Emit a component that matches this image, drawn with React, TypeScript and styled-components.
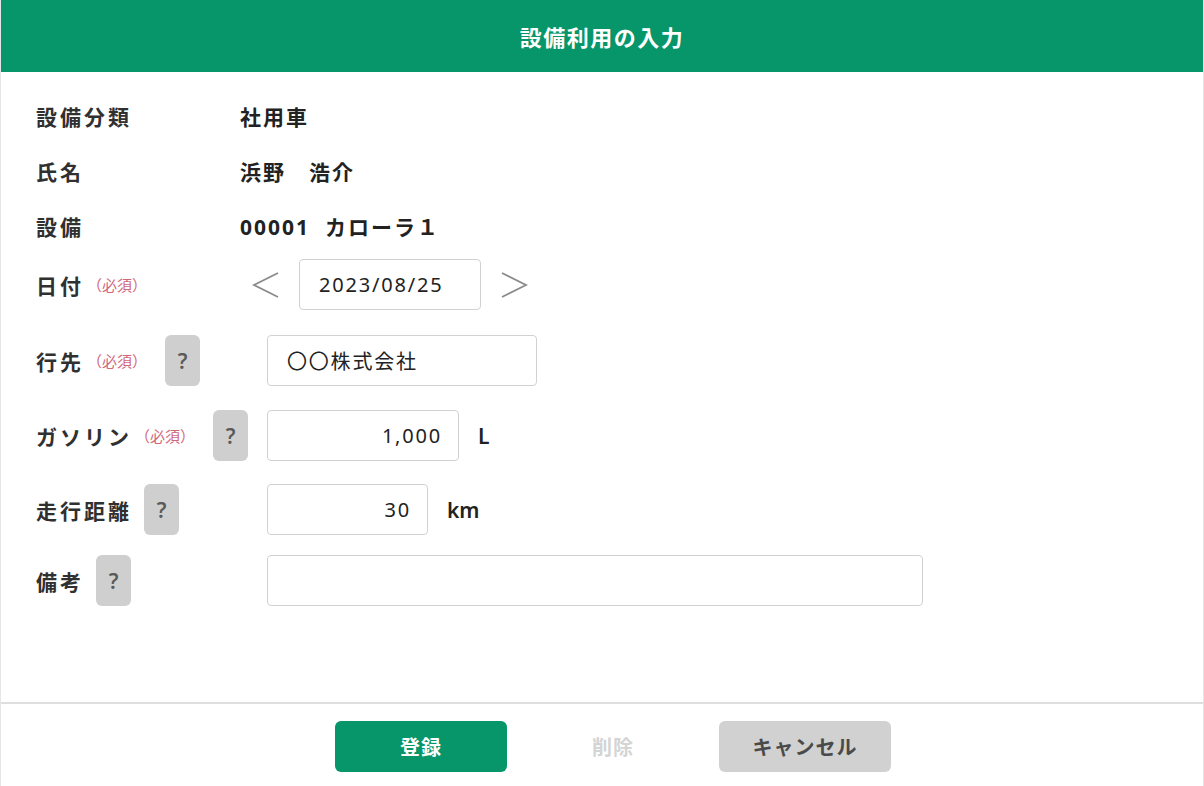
import * as React from 'react';
import styled, { createGlobalStyle } from 'styled-components';

const GlobalStyle = createGlobalStyle`
    html, body {
        margin: 0;
        padding: 0;
        background: #ffffff;
    }
    body {
        font-family: "Noto Sans", "Noto Sans CJK JP", sans-serif;
        color: #2a2a2a;
    }
`;

const Page = styled.div`
    width: 1204px;
    height: 786px;
    display: flex;
    flex-direction: column;
    box-sizing: border-box;
    border-left: 1px solid #e6e6e6;
    border-right: 1px solid #e6e6e6;
`;

const Header = styled.header`
    height: 72px;
    flex-shrink: 0;
    background: #07966a;
    display: flex;
    align-items: center;
    justify-content: center;
    color: #ffffff;
    font-size: 22px;
    font-weight: bold;
    letter-spacing: 1.5px;
`;

const Form = styled.main`
    flex: 1;
    padding: 16px 0 0 35px;
    display: flex;
    flex-direction: column;
`;

const InfoRow = styled.div`
    height: 55px;
    display: flex;
    align-items: center;
`;

const FieldRow = styled.div<{ $top: number }>`
    height: 51px;
    margin-top: ${(p) => p.$top}px;
    display: flex;
    align-items: center;
`;

const LabelArea = styled.div<{ $width: number }>`
    width: ${(p) => p.$width}px;
    height: 100%;
    flex-shrink: 0;
    display: flex;
    align-items: center;
`;

const Label = styled.span`
    font-size: 21px;
    font-weight: bold;
    letter-spacing: 3px;
    color: #303030;
`;

const Required = styled.span`
    font-size: 15px;
    color: #d2677a;
    margin-left: 3px;
    margin-right: 6px;
    letter-spacing: 0;
`;

const HelpButton = styled.button`
    width: 35px;
    height: 51px;
    margin-left: 12px;
    border: none;
    border-radius: 6px;
    background: #cfcfcf;
    color: #5a5a5a;
    font-family: "Noto Sans", sans-serif;
    font-size: 21px;
    font-weight: 600;
    padding: 0;
    cursor: pointer;
`;

const Value = styled.span`
    font-size: 21px;
    font-weight: bold;
    letter-spacing: 2px;
    color: #222222;
    white-space: pre;
`;

const DateNav = styled.div`
    display: flex;
    align-items: center;
    gap: 18px;
`;

const Chevron = styled.button`
    width: 30px;
    height: 34px;
    border: none;
    background: none;
    padding: 0;
    display: flex;
    align-items: center;
    justify-content: center;
    cursor: pointer;
`;

const TextBox = styled.div<{ $width: number; $align?: string }>`
    width: ${(p) => p.$width}px;
    height: 51px;
    box-sizing: border-box;
    border: 1px solid #d2d2d2;
    border-radius: 4px;
    display: flex;
    align-items: center;
    justify-content: ${(p) => (p.$align === 'right' ? 'flex-end' : 'flex-start')};
    padding: 0 16px 0 19px;
    font-size: 20px;
    letter-spacing: 1.8px;
    color: #222222;
    background: #ffffff;
`;

const Unit = styled.span`
    margin-left: 19px;
    font-size: 21px;
    font-weight: 600;
    color: #222222;
`;

const Footer = styled.footer`
    height: 84px;
    flex-shrink: 0;
    border-top: 2px solid #dedede;
    display: flex;
    justify-content: center;
    align-items: flex-start;
    padding: 17px 0 0 22px;
    gap: 20px;
    box-sizing: border-box;
`;

const ActionButton = styled.button<{ $variant: 'primary' | 'disabled' | 'secondary' }>`
    width: 172px;
    height: 51px;
    border: none;
    border-radius: 6px;
    font-family: "Noto Sans", "Noto Sans CJK JP", sans-serif;
    font-size: 20px;
    font-weight: bold;
    letter-spacing: 1px;
    cursor: pointer;
    background: ${(p) => (p.$variant === 'primary' ? '#07966a' : p.$variant === 'secondary' ? '#d1d1d1' : 'transparent')};
    color: ${(p) => (p.$variant === 'primary' ? '#ffffff' : p.$variant === 'secondary' ? '#4a4a4a' : '#d4d4d4')};
`;

const ArrowIcon = ({ dir }: { dir: 'left' | 'right' }) => (
    <svg width="28" height="30" viewBox="0 0 28 30">
        <polyline
            points={dir === 'left' ? '26,3 2,15 26,27' : '2,3 26,15 2,27'}
            fill="none"
            stroke="#8a8a8a"
            strokeWidth="1.8"
        />
    </svg>
);

const info = [
    { label: '設備分類', value: '社用車' },
    { label: '氏名', value: '浜野　浩介' },
    { label: '設備', value: '00001  カローラ１' },
];

const fields = [
    { label: '行先', required: true, top: 25, box: 270, align: 'left', text: '〇〇株式会社', unit: '' },
    { label: 'ガソリン', required: true, top: 24, box: 192, align: 'right', text: '1,000', unit: 'L' },
    { label: '走行距離', required: false, top: 23, box: 161, align: 'right', text: '30', unit: 'km' },
    { label: '備考', required: false, top: 20, box: 656, align: 'left', text: '', unit: '' },
];

const App = () => {
    return (
        <>
            <GlobalStyle />
            <Page>
                <Header>設備利用の入力</Header>
                <Form>
                    {info.map((item) => (
                        <InfoRow key={item.label}>
                            <LabelArea $width={204}>
                                <Label>{item.label}</Label>
                            </LabelArea>
                            <Value>{item.value}</Value>
                        </InfoRow>
                    ))}
                    <FieldRow $top={6}>
                        <LabelArea $width={215}>
                            <Label>日付</Label>
                            <Required>（必須）</Required>
                        </LabelArea>
                        <DateNav>
                            <Chevron aria-label="前日">
                                <ArrowIcon dir="left" />
                            </Chevron>
                            <TextBox $width={182}>2023/08/25</TextBox>
                            <Chevron aria-label="翌日">
                                <ArrowIcon dir="right" />
                            </Chevron>
                        </DateNav>
                    </FieldRow>
                    {fields.map((f) => (
                        <FieldRow key={f.label} $top={f.top}>
                            <LabelArea $width={231}>
                                <Label>{f.label}</Label>
                                {f.required && <Required>（必須）</Required>}
                                <HelpButton>?</HelpButton>
                            </LabelArea>
                            <TextBox $width={f.box} $align={f.align}>
                                {f.text}
                            </TextBox>
                            {f.unit && <Unit>{f.unit}</Unit>}
                        </FieldRow>
                    ))}
                </Form>
                <Footer>
                    <ActionButton $variant="primary">登録</ActionButton>
                    <ActionButton $variant="disabled" disabled>
                        削除
                    </ActionButton>
                    <ActionButton $variant="secondary">キャンセル</ActionButton>
                </Footer>
            </Page>
        </>
    );
};

export default App;
